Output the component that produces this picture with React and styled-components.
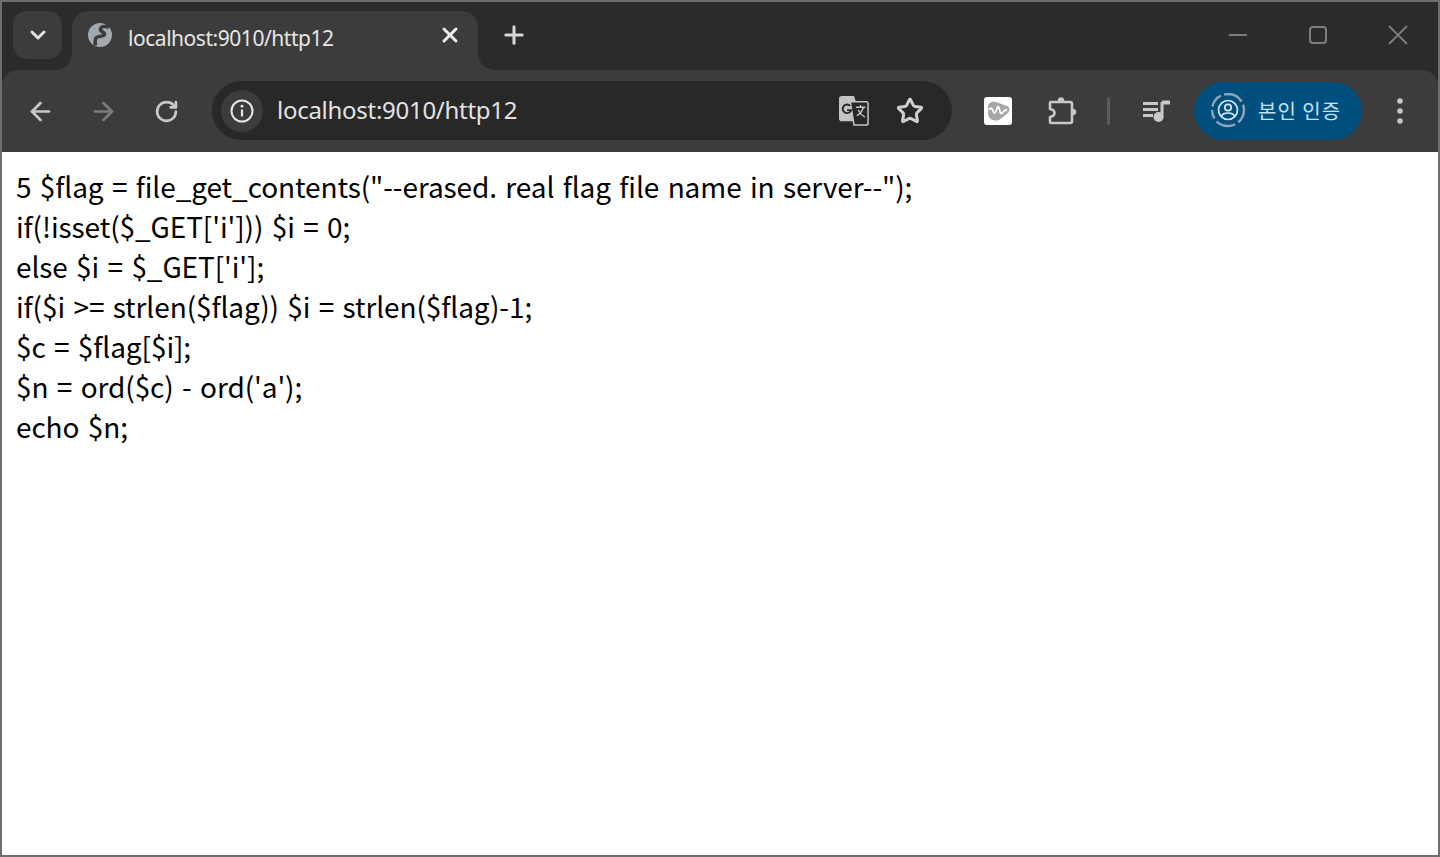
import React from 'react';
import styled, { createGlobalStyle } from 'styled-components';
import { ArrowLeft, ArrowRight, RotateCw, Star, X, Plus, ChevronDown } from 'lucide-react';

const GlobalStyle = createGlobalStyle`
  html, body { margin: 0; padding: 0; height: 100%; background: #fff; }
  #root { height: 100%; }
`;

const Window = styled.div`
  box-sizing: border-box;
  height: 857px;
  border: 2px solid #6e6e6e;
  display: flex;
  flex-direction: column;
  background: #2b2b2b;
  overflow: hidden;
`;

const TabStrip = styled.div`
  height: 68px;
  display: flex;
  align-items: flex-end;
  background: #2b2b2b;
  flex-shrink: 0;
`;

const TabMenu = styled.button`
  width: 49px;
  height: 48px;
  margin: 0 10px 11px 11px;
  padding: 0;
  border: 0;
  border-radius: 14px;
  background: #3c3c3c;
  color: #e3e3e3;
  display: flex;
  align-items: center;
  justify-content: center;
`;

const Tab = styled.div`
  position: relative;
  box-sizing: border-box;
  width: 406px;
  height: 59px;
  padding: 0 16px 11px 16px;
  background: #3c3c3c;
  border-radius: 16px 16px 0 0;
  display: flex;
  align-items: center;
  color: #e6e6e6;

  &::before, &::after {
    content: '';
    position: absolute;
    bottom: 0;
    width: 16px;
    height: 16px;
  }
  &::before {
    left: -16px;
    background: radial-gradient(circle at 0 0, transparent 15.5px, #3c3c3c 16px);
  }
  &::after {
    right: -16px;
    background: radial-gradient(circle at 100% 0, transparent 15.5px, #3c3c3c 16px);
  }
`;

const TabTitle = styled.span`
  flex: 1;
  margin-left: 16px;
  padding-top: 5px;
  font: 400 21px "Noto Sans", sans-serif;
  letter-spacing: -0.46px;
  white-space: nowrap;
`;

const TabClose = styled.span`
  display: flex;
  color: #ededed;
`;

const NewTab = styled.div`
  margin: 0 0 21px 22px;
  display: flex;
  color: #d8d8d8;
`;

const WindowControls = styled.div`
  margin-left: auto;
  align-self: flex-start;
  display: flex;
`;

const WindowButton = styled.div`
  width: 80px;
  height: 66px;
  display: flex;
  align-items: center;
  justify-content: center;
  color: #7d7d7d;
`;

const Toolbar = styled.div`
  position: relative;
  height: 82px;
  padding-left: 7px;
  display: flex;
  align-items: center;
  background: #3c3c3c;
  border-radius: 16px 16px 0 0;
  flex-shrink: 0;
`;

const ToolButton = styled.div`
  width: ${(props) => (props.w ? props.w : '64px')};
  height: 60px;
  flex-shrink: 0;
  display: flex;
  align-items: center;
  justify-content: center;
  color: ${(props) => (props.dim ? '#7c7c7c' : '#c8c8c8')};
`;

const AddressBar = styled.div`
  box-sizing: border-box;
  width: 740px;
  height: 59px;
  margin: -1px 14px 0 14px;
  padding: 0 14px 0 9px;
  border-radius: 30px;
  background: #282828;
  display: flex;
  align-items: center;
  flex-shrink: 0;
`;

const InfoChip = styled.div`
  width: 42px;
  height: 42px;
  border-radius: 50%;
  background: #3c3c3c;
  display: flex;
  align-items: center;
  justify-content: center;
  color: #e6e6e6;
`;

const Url = styled.span`
  flex: 1;
  margin: -2px 0 0 14px;
  font: 400 24px "Noto Sans", sans-serif;
  letter-spacing: -0.28px;
  color: #e3e3e3;
  white-space: nowrap;
`;

const AddressIcon = styled.div`
  width: 56px;
  height: 42px;
  display: flex;
  align-items: center;
  justify-content: center;
  color: #cfcfcf;
`;

const Divider = styled.div`
  width: 3px;
  height: 28px;
  margin: 0 15px 0 13px;
  border-radius: 2px;
  background: #5c5c5c;
  flex-shrink: 0;
`;

const VerifyPill = styled.div`
  box-sizing: border-box;
  width: 168px;
  height: 58px;
  margin: 0 6px 0 5px;
  padding: 0 0 2px 16px;
  border-radius: 29px;
  background: #004f7f;
  display: flex;
  align-items: center;
  gap: 12px;
  flex-shrink: 0;
`;

const VerifyLabel = styled.span`
  font: 400 20px "Noto Sans CJK KR", sans-serif;
  letter-spacing: 1px;
  color: #c3e3f8;
  white-space: nowrap;
`;

const Page = styled.main`
  flex: 1;
  padding: 14px 14px 0;
  background: #fff;
  color: #000;
  font: 400 28px/40px "Noto Sans CJK KR", sans-serif;
  letter-spacing: -0.09px;
  word-spacing: 2.2px;
`;

const CodeLine = styled.div`
  white-space: pre;
`;

const GlobeIcon = () => (
  <svg width="24" height="24" viewBox="0 0 24 24">
    <circle cx="12" cy="12" r="12" fill="#a3a9b0" />
    <path d="M21 4.500c-3-1.500-8-1.500-8.500 1.500s4.500 3 4 5.500-6 1-8 3-1.500 5-1 8" fill="none" stroke="#3c3c3c" strokeWidth="3.600" />
  </svg>
);

const MinimizeIcon = () => (
  <svg width="20" height="20" viewBox="0 0 20 20">
    <path d="M1 10h18" stroke="currentColor" strokeWidth="2" />
  </svg>
);

const MaximizeIcon = () => (
  <svg width="20" height="20" viewBox="0 0 20 20">
    <rect x="2" y="2" width="16" height="16" rx="3" fill="none" stroke="currentColor" strokeWidth="2" />
  </svg>
);

const CloseIcon = () => (
  <svg width="20" height="20" viewBox="0 0 20 20">
    <path d="M1 1l18 18M19 1L1 19" stroke="currentColor" strokeWidth="1.8" />
  </svg>
);

const InfoIcon = () => (
  <svg width="24" height="24" viewBox="0 0 24 24">
    <circle cx="12" cy="12" r="10.5" fill="none" stroke="currentColor" strokeWidth="2" />
    <path d="M12 10.5v7" stroke="currentColor" strokeWidth="2.2" />
    <circle cx="12" cy="7.2" r="1.4" fill="currentColor" />
  </svg>
);

const TranslateIcon = () => (
  <svg width="30" height="30" viewBox="0 0 32 32">
    <path d="M3 0h13l9 27H3a3 3 0 0 1-3-3V3a3 3 0 0 1 3-3z" fill="#c4c4c4" />
    <path d="M12 6h17a2 2 0 0 1 2 2v21a2 2 0 0 1-2 2H16z" fill="#282828" stroke="#c4c4c4" strokeWidth="1.6" />
    <path d="M12 10.5A4.6 4.6 0 1 0 13 15H8.6" fill="none" stroke="#282828" strokeWidth="2" />
    <path d="M18 12h10M23 9.500V12M26 12c-1 4-3.500 7-7 9M20.500 15c1.400 3 4 5.800 7 7.500" fill="none" stroke="#c4c4c4" strokeWidth="1.500" />
  </svg>
);

const WaveExtensionIcon = () => (
  <svg width="28" height="28" viewBox="0 0 28 28">
    <rect width="28" height="28" rx="3" fill="#fff" />
    <path d="M4 10c0-4 4-6 8-5l11 4c3 1 3 5 1 7l-9 7c-5 2-11-1-11-7z" fill="#a6a6a6" />
    <path d="M5 13c2-3 3-2 4 1s2 3 3 0 2-6 3-3 1 7 3 5 2-3 5-3" fill="none" stroke="#fff" strokeWidth="1.800" />
  </svg>
);

const PuzzleIcon = () => (
  <svg width="30" height="30" viewBox="0 0 30 30">
    <circle cx="14" cy="4.500" r="3.200" fill="currentColor" />
    <circle cx="26" cy="16" r="3.200" fill="currentColor" />
    <path d="M4 6h19a2 2 0 0 1 2 2v17a2 2 0 0 1-2 2H4a1 1 0 0 1-1-1v-5c3-.5 4.500-2 4.500-4s-1.500-3.500-4.500-4V7a1 1 0 0 1 1-1z" fill="#3c3c3c" stroke="currentColor" strokeWidth="2.600" strokeLinejoin="round" />
  </svg>
);

const QueueMusicIcon = () => (
  <svg width="28" height="24" viewBox="0 0 28 24">
    <path d="M0 3h15v3H0zM0 9h15v3H0zM0 15h10v3H0z" fill="currentColor" />
    <path d="M19 3v15" stroke="currentColor" strokeWidth="3" />
    <path d="M19 1.500h8v4h-8z" fill="currentColor" />
    <circle cx="15.500" cy="18" r="5" fill="currentColor" />
  </svg>
);

const VerifyIcon = () => (
  <svg width="36" height="36" viewBox="0 0 36 36">
    <circle cx="18" cy="18" r="16" fill="none" stroke="#8fa6b6" strokeWidth="2.400" strokeDasharray="14 3.500 20 3.500 9 3.500" />
    <circle cx="18" cy="18" r="9.500" fill="none" stroke="#d7e9f5" strokeWidth="1.700" />
    <circle cx="18" cy="15.500" r="3.200" fill="none" stroke="#d7e9f5" strokeWidth="1.700" />
    <path d="M11.500 24c2-4 11-4 13 0" fill="none" stroke="#d7e9f5" strokeWidth="1.700" />
  </svg>
);

const MenuIcon = () => (
  <svg width="8" height="26" viewBox="0 0 8 26">
    <circle cx="4" cy="3" r="2.800" fill="currentColor" />
    <circle cx="4" cy="13" r="2.800" fill="currentColor" />
    <circle cx="4" cy="23" r="2.800" fill="currentColor" />
  </svg>
);

const codeLines = [
  '5 $flag = file_get_contents("--erased. real flag file name in server--");',
  "if(!isset($_GET['i'])) $i = 0;",
  "else $i = $_GET['i'];",
  'if($i >= strlen($flag)) $i = strlen($flag)-1;',
  '$c = $flag[$i];',
  "$n = ord($c) - ord('a');",
  'echo $n;',
];

const App = () => {
  return (
    <>
      <GlobalStyle />
      <Window>
        <TabStrip>
          <TabMenu>
            <ChevronDown size={24} strokeWidth={3} />
          </TabMenu>
          <Tab>
            <GlobeIcon />
            <TabTitle>localhost:9010/http12</TabTitle>
            <TabClose>
              <X size={24} strokeWidth={3} />
            </TabClose>
          </Tab>
          <NewTab>
            <Plus size={28} strokeWidth={2.6} />
          </NewTab>
          <WindowControls>
            <WindowButton><MinimizeIcon /></WindowButton>
            <WindowButton><MaximizeIcon /></WindowButton>
            <WindowButton><CloseIcon /></WindowButton>
          </WindowControls>
        </TabStrip>
        <Toolbar>
          <ToolButton w="63px"><ArrowLeft size={29} strokeWidth={2.2} /></ToolButton>
          <ToolButton w="63px" dim><ArrowRight size={29} strokeWidth={2.2} /></ToolButton>
          <ToolButton w="63px"><RotateCw size={25} strokeWidth={2.6} /></ToolButton>
          <AddressBar>
            <InfoChip><InfoIcon /></InfoChip>
            <Url>localhost:9010/http12</Url>
            <AddressIcon><TranslateIcon /></AddressIcon>
            <AddressIcon><Star size={28} strokeWidth={2.6} /></AddressIcon>
          </AddressBar>
          <ToolButton><WaveExtensionIcon /></ToolButton>
          <ToolButton><PuzzleIcon /></ToolButton>
          <Divider />
          <ToolButton><QueueMusicIcon /></ToolButton>
          <VerifyPill>
            <VerifyIcon />
            <VerifyLabel>본인 인증</VerifyLabel>
          </VerifyPill>
          <ToolButton><MenuIcon /></ToolButton>
        </Toolbar>
        <Page>
          {codeLines.map((line) => (
            <CodeLine key={line}>{line}</CodeLine>
          ))}
        </Page>
      </Window>
    </>
  );
};

export default App;
